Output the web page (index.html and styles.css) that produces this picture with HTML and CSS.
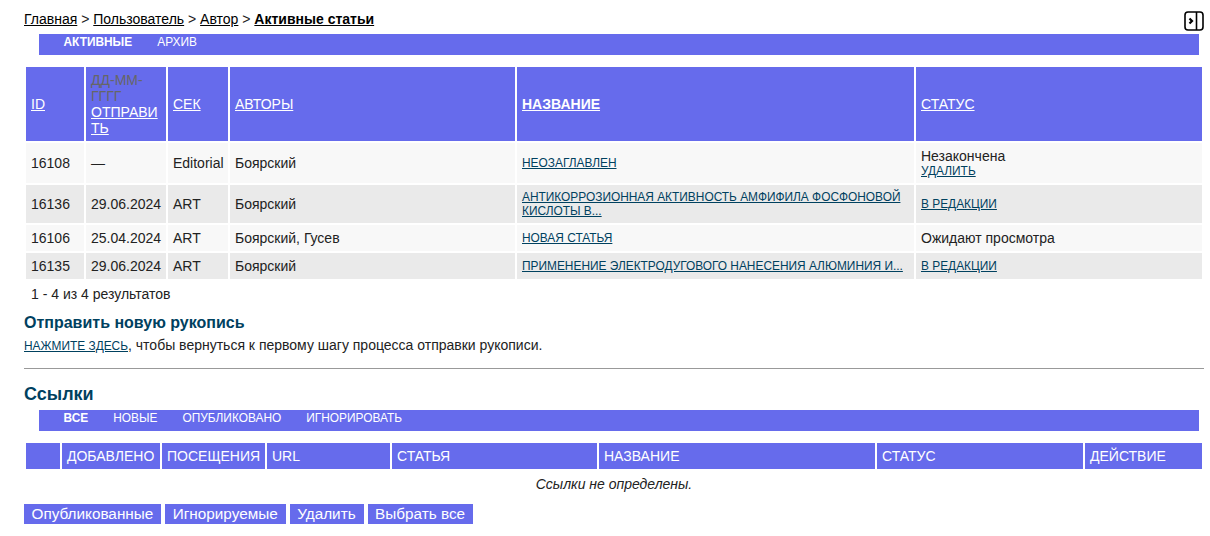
FILE: index.html
```html
<!DOCTYPE html>
<html lang="ru">
<head>
<meta charset="utf-8">
<title>Активные статьи</title>
<link rel="stylesheet" href="styles.css">
</head>
<body>
<div class="page">
  <div class="crumbs">
    <a href="#">Главная</a> &gt; <a href="#">Пользователь</a> &gt; <a href="#">Автор</a> &gt; <a href="#" class="current">Активные статьи</a>
  </div>
  <button class="toggle" aria-label="Панель">
    <svg width="20" height="20" viewBox="0 0 20 20"><rect x="1" y="1" width="18" height="18" rx="3" fill="none" stroke="#000" stroke-width="1.6"/><path d="M12.5 1v18" stroke="#000" stroke-width="1.6"/><path d="M5.5 7.5l2.5 2.5-2.5 2.5" fill="none" stroke="#000" stroke-width="2.2"/></svg>
  </button>
  <ul class="tabs">
    <li class="on"><a href="#">Активные</a></li>
    <li><a href="#">Архив</a></li>
  </ul>
  <table class="grid articles">
    <colgroup><col class="a1"><col class="a2"><col class="a3"><col class="a4"><col class="a5"><col class="a6"></colgroup>
    <thead>
      <tr>
        <th><a href="#">ID</a></th>
        <th><span class="hint">ДД-ММ-ГГГГ</span><br><a href="#">ОТПРАВИТЬ</a></th>
        <th><a href="#">СЕК</a></th>
        <th><a href="#">АВТОРЫ</a></th>
        <th><a href="#" class="sorted">НАЗВАНИЕ</a></th>
        <th><a href="#">СТАТУС</a></th>
      </tr>
    </thead>
    <tbody>
      <tr class="r1">
        <td>16108</td><td>—</td><td>Editorial</td><td>Боярский</td>
        <td class="small"><a href="#" class="link">НЕОЗАГЛАВЛЕН</a></td>
        <td class="status">Незакончена<a href="#" class="link">УДАЛИТЬ</a></td>
      </tr>
      <tr class="r2">
        <td>16136</td><td>29.06.2024</td><td>ART</td><td>Боярский</td>
        <td class="small"><a href="#" class="link">АНТИКОРРОЗИОННАЯ АКТИВНОСТЬ АМФИФИЛА ФОСФОНОВОЙ КИСЛОТЫ В...</a></td>
        <td class="small"><a href="#" class="link">В РЕДАКЦИИ</a></td>
      </tr>
      <tr class="r1">
        <td>16106</td><td>25.04.2024</td><td>ART</td><td>Боярский, Гусев</td>
        <td class="small"><a href="#" class="link">НОВАЯ СТАТЬЯ</a></td>
        <td>Ожидают просмотра</td>
      </tr>
      <tr class="r2">
        <td>16135</td><td>29.06.2024</td><td>ART</td><td>Боярский</td>
        <td class="small"><a href="#" class="link">ПРИМЕНЕНИЕ ЭЛЕКТРОДУГОВОГО НАНЕСЕНИЯ АЛЮМИНИЯ И...</a></td>
        <td class="small"><a href="#" class="link">В РЕДАКЦИИ</a></td>
      </tr>
    </tbody>
  </table>
  <p class="count">1 - 4 из 4 результатов</p>
  <h3 class="sub">Отправить новую рукопись</h3>
  <p class="note"><a href="#" class="here">Нажмите здесь</a>, чтобы вернуться к первому шагу процесса отправки рукописи.</p>
  <hr class="rule">
  <h2 class="head">Ссылки</h2>
  <ul class="tabs">
    <li class="on"><a href="#">Все</a></li>
    <li><a href="#">Новые</a></li>
    <li><a href="#">Опубликовано</a></li>
    <li><a href="#">Игнорировать</a></li>
  </ul>
  <table class="grid links">
    <colgroup><col class="b1"><col class="b2"><col class="b3"><col class="b4"><col class="b5"><col class="b6"><col class="b7"><col class="b8"></colgroup>
    <thead>
      <tr><th></th><th>ДОБАВЛЕНО</th><th>ПОСЕЩЕНИЯ</th><th>URL</th><th>СТАТЬЯ</th><th>НАЗВАНИЕ</th><th>СТАТУС</th><th>ДЕЙСТВИЕ</th></tr>
    </thead>
    <tbody>
      <tr><td colspan="8" class="none">Ссылки не определены.</td></tr>
    </tbody>
  </table>
  <div class="actions">
    <button class="btn">Опубликованные</button>
    <button class="btn">Игнорируемые</button>
    <button class="btn">Удалить</button>
    <button class="btn">Выбрать все</button>
  </div>
</div>
</body>
</html>
```
FILE: styles.css
```css
* { box-sizing: border-box; }
html, body { margin: 0; padding: 0; background: #fff; }
body { font-family: "Liberation Sans", Arial, sans-serif; font-size: 14px; line-height: 16px; color: #222; }
.page { position: relative; padding: 11px 6px 0 24px; }
.crumbs { height: 23px; line-height: 16px; color: #222; }
.crumbs a { color: #000; text-decoration: underline; }
.crumbs .current { font-weight: bold; }
.toggle { position: absolute; top: 11px; right: 6px; width: 20px; height: 20px; padding: 0; border: 0; background: none; }
.toggle svg { display: block; }
.tabs { list-style: none; margin: 0 5px 0 15px; padding: 0 0 0 12px; height: 21px; background: #666bec; display: flex; font-size: 11.9px; line-height: 17px; text-transform: uppercase; }
.tabs li { padding: 0 12.5px; }
.tabs a { color: #fff; text-decoration: none; }
.tabs .on a { font-weight: bold; }
.grid { width: 1180px; table-layout: fixed; border-collapse: separate; border-spacing: 2px; }
.grid th { background: #666bec; color: #fff; font-weight: normal; text-align: left; padding: 5px; }
.grid th a { color: #fff; }
.grid .sorted { font-weight: bold; }
.grid .hint { color: #666; }
.articles { margin-top: 10px; }
.articles th { overflow-wrap: anywhere; }
.articles td { padding: 5px; vertical-align: middle; height: 26px; }
.articles .r1 td { background: #f8f8f8; }
.articles .r2 td { background: #eaeaea; }
.articles .small { font-size: 11.9px; line-height: 14px; }
.articles .status { line-height: 15px; padding: 6px 5px 4px; }
.status .link { display: block; line-height: 15px; }
.link { font-size: 11.9px; color: #00415f; text-decoration: underline; }
.a1 { width: 58px; } .a2 { width: 80px; } .a3 { width: 60px; } .a4 { width: 285px; } .a5 { width: 397px; } .a6 { width: 286px; }
.count { margin: 5px 0 0 7px; font-size: 14px; line-height: 16px; }
.sub { margin: 12px 0 0; font-size: 16px; line-height: 18px; font-weight: bold; color: #00415f; }
.note { margin: 5px 0 0; font-size: 14px; line-height: 16px; }
.here { font-size: 11.9px; color: #00415f; text-transform: uppercase; }
.rule { margin: 14px 0 0; border: 0; border-top: 1px solid #999; height: 0; }
.head { margin: 15px 0 6px; font-size: 18px; line-height: 20px; font-weight: bold; color: #00415f; }
.links { margin-top: 10px; }
.links th { padding: 5px; height: 26px; line-height: 16px; }
.none { text-align: center; font-style: italic; font-size: 14px; padding: 5px 0; line-height: 16px; }
.b1 { width: 34px; } .b2 { width: 98px; } .b3 { width: 103px; } .b4 { width: 123px; } .b5 { width: 205px; } .b6 { width: 276px; } .b7 { width: 206px; } .b8 { width: 117px; }
.actions { display: flex; gap: 4px; margin-top: 5px; }
.btn { height: 20px; padding: 0 8px 0 7.5px; border: 0; background: #666bec; color: #fff; font-family: inherit; font-size: 15.3px; line-height: 20px; }
```
